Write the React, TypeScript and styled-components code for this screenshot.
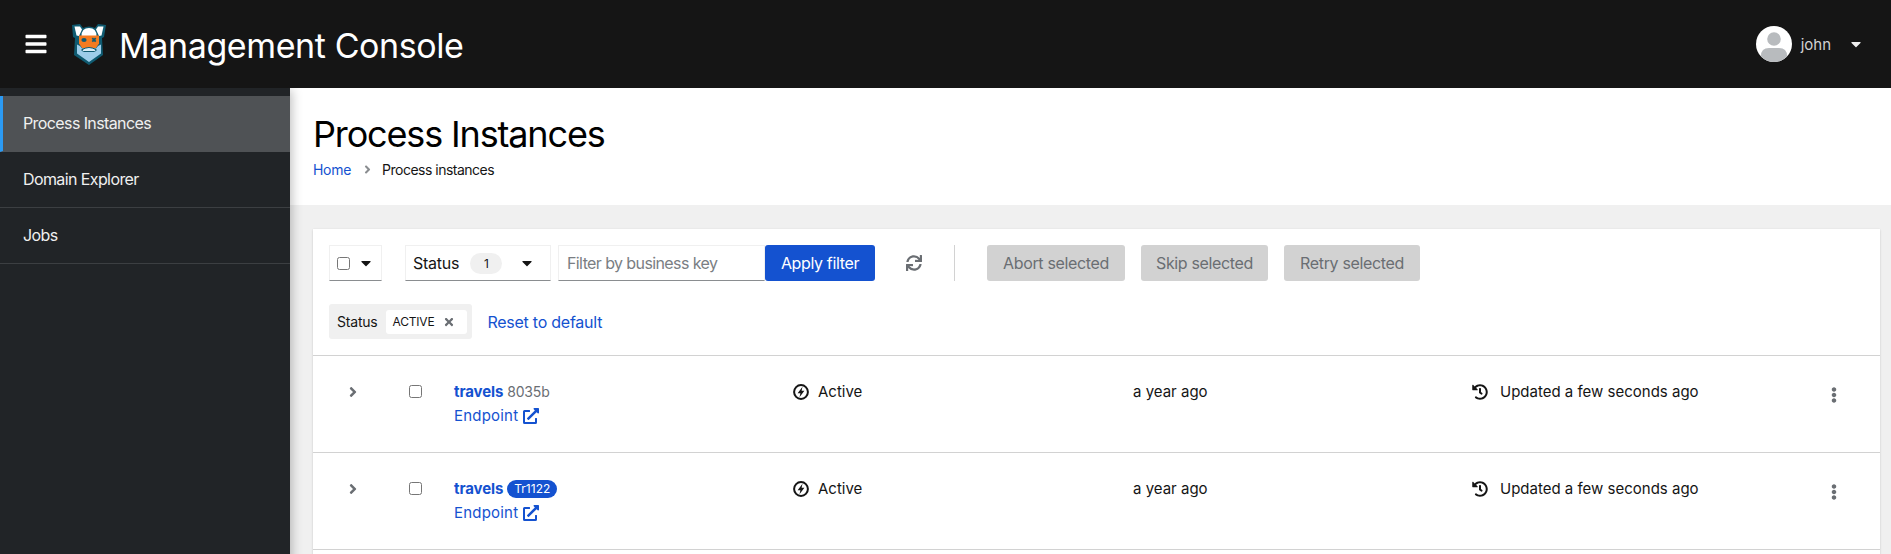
import React from 'react';
import styled, { createGlobalStyle } from 'styled-components';
import {
  FaAngleRight,
  FaBars,
  FaCaretDown,
  FaEllipsisV,
  FaExternalLinkAlt,
  FaHistory,
  FaSync,
  FaTimes,
} from 'react-icons/fa';

const GlobalStyle = createGlobalStyle`
  html, body {
    margin: 0;
    padding: 0;
    height: 100%;
    overflow: hidden;
    background: #f0f0f0;
  }
  * { box-sizing: border-box; }
  body {
    font-family: "Inter", "Liberation Sans", sans-serif;
    font-size: 16px;
    color: #151515;
  }
`;

const Page = styled.div`
  display: grid;
  grid-template-columns: 290px 1fr;
  grid-template-rows: 88px 1fr;
  height: 554px;
  overflow: hidden;
`;

const Header = styled.header`
  grid-column: 1 / 3;
  display: flex;
  align-items: center;
  background: #151515;
  color: #fff;
  padding: 0 27px 0 24px;
  position: relative;
  z-index: 2;
`;

const MenuButton = styled.div`
  display: flex;
  font-size: 24px;
  width: 48px;
`;

const BrandTitle = styled.div`
  font-size: 34px;
  letter-spacing: -0.4px;
  margin-left: 13px;
  margin-top: 2px;
`;

const UserArea = styled.div`
  margin-left: auto;
  display: flex;
  align-items: center;
  font-size: 15px;
  color: #d2d2d2;
`;

const UserName = styled.span`
  margin-left: 9px;
  margin-right: 17px;
`;

const UserCaret = styled(FaCaretDown)`
  color: #eee;
  font-size: 16px;
`;

const Sidebar = styled.nav`
  background: #212427;
  padding-top: 8px;
  box-shadow: 4px 0 10px -2px rgba(3, 3, 3, 0.25);
  position: relative;
  z-index: 1;
`;

const NavItem = styled.div<{ $current?: boolean }>`
  height: 56px;
  display: flex;
  align-items: center;
  font-size: 16px;
  letter-spacing: -0.6px;
  color: #f0f0f0;
  padding-left: ${p => (p.$current ? '20px' : '23px')};
  padding-bottom: 2px;
  background: ${p => (p.$current ? '#4f5255' : 'transparent')};
  border-left: ${p => (p.$current ? '3px solid #2b9af3' : 'none')};
  border-bottom: 1px solid ${p => (p.$current ? 'transparent' : '#3c3f42')};
`;

const Main = styled.main`
  display: flex;
  flex-direction: column;
  min-width: 0;
`;

const TitleSection = styled.section`
  background: #fff;
  height: 117px;
  padding: 23px 23px 0;
`;

const PageTitle = styled.h1`
  margin: 0;
  font-size: 36px;
  font-weight: 400;
  line-height: 47px;
  letter-spacing: -1.15px;
  color: #000;
`;

const Breadcrumb = styled.div`
  display: flex;
  align-items: center;
  margin-top: 1px;
  font-size: 14px;
  line-height: 21px;
  letter-spacing: -0.5px;
`;

const BreadcrumbLink = styled.a`
  color: #1452d0;
  letter-spacing: -0.3px;
`;

const BreadcrumbSep = styled(FaAngleRight)`
  color: #8a8d90;
  font-size: 13px;
  margin: 0 8px 0 10px;
`;

const Content = styled.section`
  flex: 1;
  padding: 24px 11px 0 23px;
`;

const Card = styled.div`
  background: #fff;
  box-shadow: 0 1px 2px rgba(3, 3, 3, 0.12), 0 0 2px rgba(3, 3, 3, 0.06);
`;

const Toolbar = styled.div`
  padding: 16px 16px 16px;
  border-bottom: 1px solid #d2d2d2;
`;

const ToolbarRow = styled.div`
  display: flex;
  align-items: center;
  height: 36px;
`;

const ChipRow = styled(ToolbarRow)`
  height: 35px;
  margin-top: 23px;
`;

const SelectBox = styled.div<{ $width: number; $gapRight: number }>`
  display: flex;
  align-items: center;
  height: 36px;
  width: ${p => p.$width}px;
  margin-right: ${p => p.$gapRight}px;
  border: 1px solid #f0f0f0;
  border-bottom-color: #8a8d90;
  padding: 0 0 0 7px;
  font-size: 16px;
  letter-spacing: -0.25px;
`;

const Check = styled.span<{ $margin?: string }>`
  display: inline-block;
  width: 13px;
  height: 13px;
  border: 1px solid #767676;
  border-radius: 2.5px;
  background: #fff;
  margin: ${p => p.$margin || '0'};
`;

const Caret = styled(FaCaretDown)<{ $right: number }>`
  color: #151515;
  font-size: 16px;
  margin-left: auto;
  margin-right: ${p => p.$right}px;
`;

const CountBadge = styled.span`
  background: #f0f0f0;
  border-radius: 30px;
  width: 32px;
  height: 21px;
  margin-left: 11px;
  font-size: 12px;
  display: inline-flex;
  align-items: center;
  justify-content: center;
`;

const FilterInput = styled.div`
  display: flex;
  align-items: center;
  height: 36px;
  width: 207px;
  padding-left: 8px;
  border: 1px solid #f0f0f0;
  border-bottom-color: #8a8d90;
  color: #7a7e83;
  font-size: 16px;
  letter-spacing: -0.6px;
`;

const Button = styled.div<{ $width: number; $disabled?: boolean; $gapRight?: number }>`
  display: flex;
  align-items: center;
  justify-content: center;
  height: 36px;
  width: ${p => p.$width}px;
  margin-right: ${p => p.$gapRight ?? 0}px;
  border-radius: 3px;
  font-size: 16px;
  letter-spacing: -0.35px;
  background: ${p => (p.$disabled ? '#d2d2d2' : '#1452d0')};
  color: ${p => (p.$disabled ? '#6a6e73' : '#fff')};
`;

const SyncButton = styled.div`
  display: flex;
  justify-content: center;
  width: 79px;
  padding-right: 2px;
  color: #6a6e73;
  font-size: 16px;
`;

const Divider = styled.div`
  width: 1px;
  height: 36px;
  background: #d2d2d2;
  margin-right: 32px;
`;

const ChipGroup = styled.div`
  display: flex;
  align-items: center;
  height: 35px;
  background: #f0f0f0;
  border-radius: 3px;
  padding: 0 5px 0 8px;
  font-size: 14px;
  letter-spacing: -0.2px;
`;

const Chip = styled.span`
  display: flex;
  align-items: center;
  height: 24px;
  margin-left: 8px;
  padding: 0 12px 0 7px;
  background: #fff;
  border-radius: 3px;
  font-size: 12px;
`;

const ChipClose = styled(FaTimes)`
  color: #6a6e73;
  font-size: 12px;
  margin-left: 9px;
`;

const ResetLink = styled.a`
  margin-left: 15px;
  color: #1452d0;
  font-size: 16px;
  letter-spacing: -0.25px;
`;

const Row = styled.div`
  display: grid;
  grid-template-columns: 142px repeat(4, 339px) 1fr;
  height: 97px;
  border-bottom: 1px solid #d2d2d2;
  padding-top: 24px;
  font-size: 15px;
  line-height: 24px;
`;

const ToggleCell = styled.div`
  display: flex;
  align-items: center;
  height: 24px;
  color: #6a6e73;
  font-size: 16px;
  padding-left: 32px;
`;

const NameCell = styled.div`
  margin-left: -1px;
`;

const NameLine = styled.div`
  display: flex;
  align-items: center;
  height: 24px;
`;

const ProcessName = styled.a`
  color: #1452d0;
  font-weight: 700;
  font-size: 15px;
  letter-spacing: -0.1px;
`;

const Suffix = styled.span`
  margin-left: 4px;
  color: #6a6e73;
  font-size: 14px;
  letter-spacing: -0.2px;
`;

const Label = styled.span`
  margin-left: 4px;
  background: #1452d0;
  color: #fff;
  border-radius: 30px;
  font-size: 12px;
  line-height: 18px;
  padding: 0 7px;
`;

const EndpointLink = styled.a`
  display: flex;
  align-items: center;
  gap: 5px;
  color: #1452d0;
  font-size: 15px;
  letter-spacing: 0.2px;
  line-height: 24px;
  height: 24px;
`;

const TextCell = styled.div`
  display: flex;
  align-items: center;
  height: 24px;
  font-size: 15px;
`;

const StateIcon = styled.svg`
  width: 16px;
  height: 16px;
  margin: 0 9px 0 -1px;
  flex: none;
`;

const HistoryIcon = styled(FaHistory)`
  font-size: 16px;
  margin-right: 12px;
  color: #151515;
`;

const Kebab = styled.div`
  display: flex;
  height: 24px;
  align-items: center;
  color: #6a6e73;
  font-size: 16px;
  padding: 5px 0 0 15px;
`;

const Logo = () => (
  <svg width="34" height="42" viewBox="0 0 34 42">
    <path d="M0 2 8 1l3 4q6-3 12 0l3-4 8 1-2 12-2 1 1 17-14 10L2 32l1-17-2-1Z" fill="#0f5a70" />
    <path d="M2.5 3.5 8 3.5 10 6.5 7 13 4.5 12.5Z" fill="#fff" />
    <path d="M31.5 3.5 26 3.5 24 6.5 27 13 29.5 12.5Z" fill="#fff" />
    <path d="M9.5 13q0-8 7.5-8t7.5 8Z" fill="#fff" />
    <path d="M7 12.5h20v8l-3 4.5H10l-3-4.5Z" fill="#f47b20" />
    <ellipse cx="12" cy="17" rx="2.6" ry="2" fill="#0f5a70" />
    <path d="M20.3 15.2l3.4 3.4M23.7 15.2l-3.4 3.4" stroke="#0f5a70" strokeWidth="1.8" fill="none" />
    <path d="M5 21.5l3 1.5 2 2.5h14l2-2.5 3-1.5v9L17 39 5 30.5Z" fill="#9dcdea" />
    <path d="M9.5 27q7.5-5 15 0l-2 1.5h-11Z" fill="#d8ecf7" stroke="#0f5a70" strokeWidth="1" />
  </svg>
);

const Avatar = () => (
  <svg width="36" height="36" viewBox="0 0 36 36">
    <defs>
      <clipPath id="avatarClip">
        <circle cx="18" cy="18" r="18" />
      </clipPath>
    </defs>
    <circle cx="18" cy="18" r="18" fill="#fff" />
    <g clipPath="url(#avatarClip)" fill="#b8bbbe">
      <circle cx="18" cy="13" r="6.8" />
      <path d="M5 36v-6q0-8 8-8h10q8 0 8 8v6Z" />
    </g>
  </svg>
);

const ActiveIcon = () => (
  <StateIcon viewBox="0 0 16 16">
    <circle cx="8" cy="8" r="6.9" fill="none" stroke="#151515" strokeWidth="2" />
    <path d="M9.5 2.8 4.6 9.2h2.8L6.5 13.2l4.9-6.4H8.6Z" fill="#151515" />
  </StateIcon>
);

const instances = [
  { id: 'a', suffix: '8035b' },
  { id: 'b', label: 'Tr1122' },
];

const App = () => (
  <Page>
    <GlobalStyle />
    <Header>
      <MenuButton>
        <FaBars />
      </MenuButton>
      <Logo />
      <BrandTitle>Management Console</BrandTitle>
      <UserArea>
        <Avatar />
        <UserName>john</UserName>
        <UserCaret />
      </UserArea>
    </Header>
    <Sidebar>
      <NavItem $current>Process Instances</NavItem>
      <NavItem>Domain Explorer</NavItem>
      <NavItem>Jobs</NavItem>
    </Sidebar>
    <Main>
      <TitleSection>
        <PageTitle>Process Instances</PageTitle>
        <Breadcrumb>
          <BreadcrumbLink>Home</BreadcrumbLink>
          <BreadcrumbSep />
          <span>Process instances</span>
        </Breadcrumb>
      </TitleSection>
      <Content>
        <Card>
          <Toolbar>
            <ToolbarRow>
              <SelectBox $width={53} $gapRight={23}>
                <Check />
                <Caret $right={7} />
              </SelectBox>
              <SelectBox $width={146} $gapRight={7}>
                Status
                <CountBadge>1</CountBadge>
                <Caret $right={15} />
              </SelectBox>
              <FilterInput>Filter by business key</FilterInput>
              <Button $width={110}>Apply filter</Button>
              <SyncButton>
                <FaSync />
              </SyncButton>
              <Divider />
              <Button $disabled $width={138} $gapRight={16}>Abort selected</Button>
              <Button $disabled $width={127} $gapRight={16}>Skip selected</Button>
              <Button $disabled $width={136}>Retry selected</Button>
            </ToolbarRow>
            <ChipRow>
              <ChipGroup>
                Status
                <Chip>
                  ACTIVE
                  <ChipClose />
                </Chip>
              </ChipGroup>
              <ResetLink>Reset to default</ResetLink>
            </ChipRow>
          </Toolbar>
          {instances.map(item => (
            <Row key={item.id}>
              <ToggleCell>
                <FaAngleRight />
                <Check $margin="-2px 0 0 48px" />
              </ToggleCell>
              <NameCell>
                <NameLine>
                  <ProcessName>travels</ProcessName>
                  {item.suffix && <Suffix>{item.suffix}</Suffix>}
                  {item.label && <Label>{item.label}</Label>}
                </NameLine>
                <EndpointLink>
                  Endpoint <FaExternalLinkAlt size={16} />
                </EndpointLink>
              </NameCell>
              <TextCell>
                <ActiveIcon />
                Active
              </TextCell>
              <TextCell>a year ago</TextCell>
              <TextCell>
                <HistoryIcon />
                Updated a few seconds ago
              </TextCell>
              <Kebab>
                <FaEllipsisV />
              </Kebab>
            </Row>
          ))}
          <Row />
        </Card>
      </Content>
    </Main>
  </Page>
);

export default App;
